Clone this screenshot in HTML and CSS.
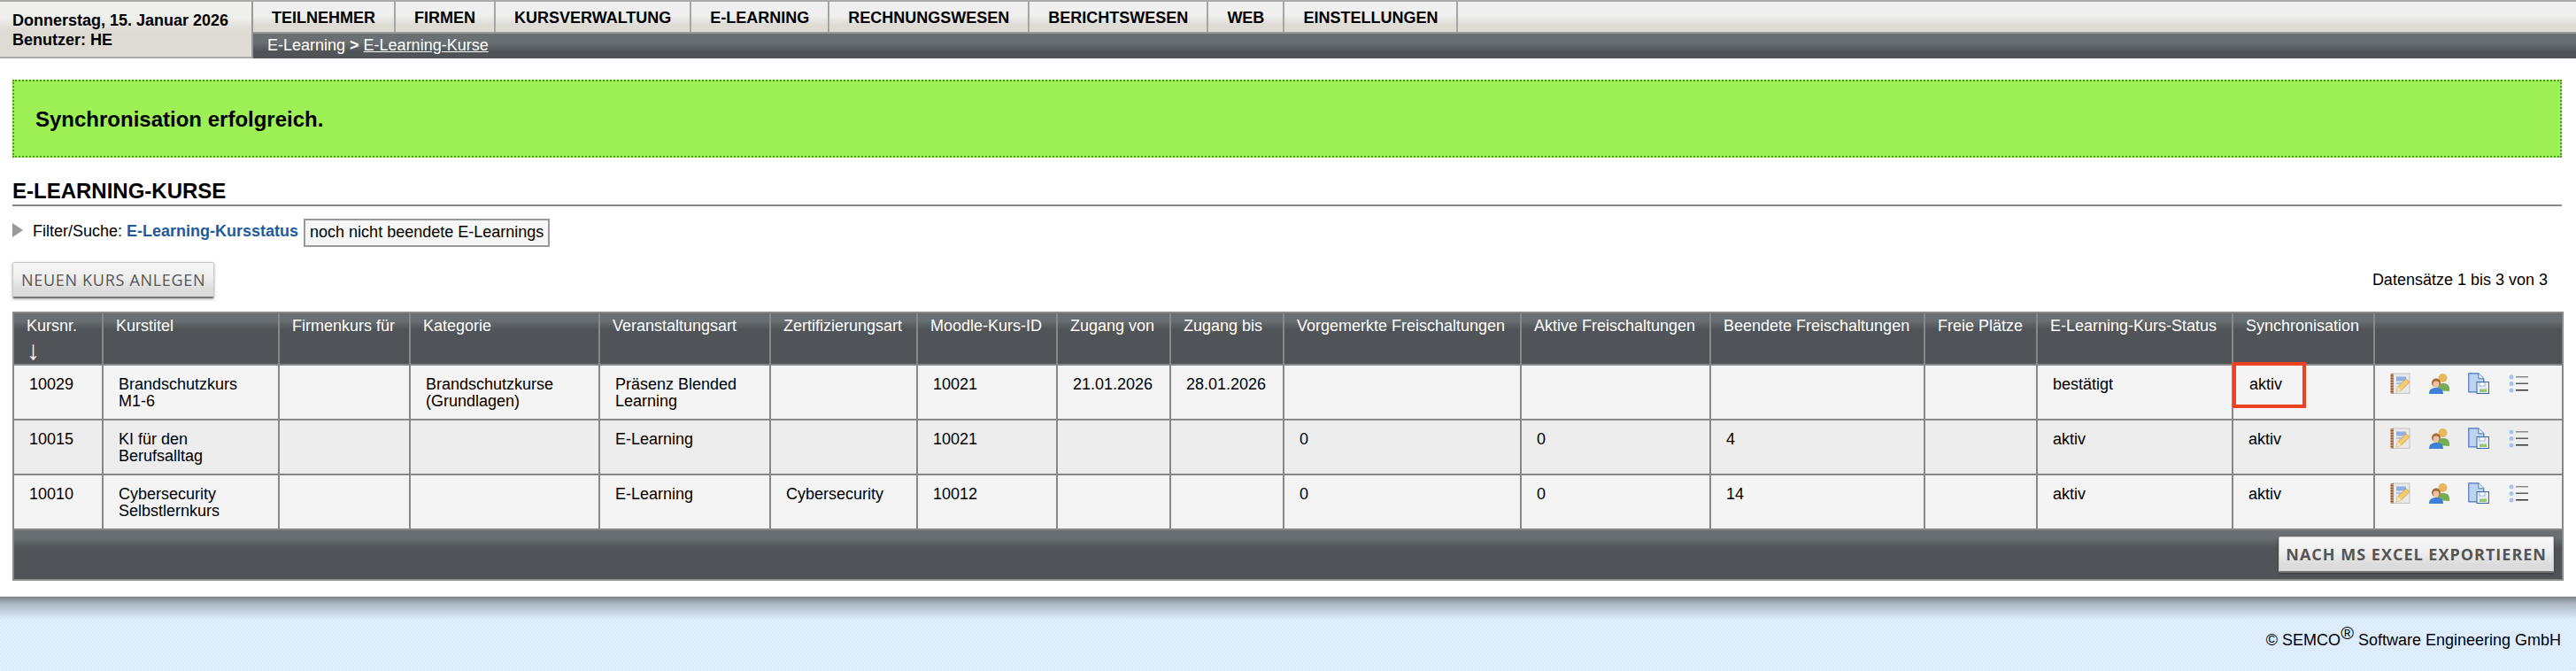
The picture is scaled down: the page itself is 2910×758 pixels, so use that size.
FILE: index.html
```html
<!DOCTYPE html>
<html lang="de">
<head>
<meta charset="utf-8">
<title>E-Learning-Kurse</title>
<link rel="stylesheet" href="styles.css">
</head>
<body>
<svg class="defs" width="0" height="0" aria-hidden="true">
  <symbol id="i-note" viewBox="0 0 24 24">
    <rect x="3" y="1" width="20" height="22.5" fill="#e8e8e8" stroke="#c4c4c4"/>
    <rect x="1.500" y="1" width="3.500" height="22.500" fill="#c08a5c"/>
    <path d="M1.500 3.500h3M1.500 6.500h3M1.500 9.500h3M1.500 12.500h3M1.500 15.500h3M1.500 18.500h3M1.500 21.500h3" stroke="#7d4d28" stroke-width=".8"/>
    <rect x="8" y="4.500" width="11" height="5" fill="#8fb0e4"/>
    <rect x="8" y="11" width="6" height="2" fill="#a9c4ea"/>
    <path d="M8 22l1.500-6L19 7l4 3.500-9.500 9.500z" fill="#f2cc70" stroke="#d09c3c" stroke-width=".8"/>
    <path d="M8 22l1.500-6 4.500 4z" fill="#f6e3b4"/>
  </symbol>
  <symbol id="i-people" viewBox="1 0 24 24">
    <circle cx="16.500" cy="6" r="5" fill="#e8b85a"/>
    <path d="M10 20c0-6 3-8 7-8s7 2 7 6v3z" fill="#74ac58"/>
    <circle cx="9" cy="11.500" r="5" fill="#a66a3c"/>
    <circle cx="9" cy="13" r="3.400" fill="#eec4a0"/>
    <path d="M1 24c0-5 3-7 8-7s8 2 8 7z" fill="#3f7fd6"/>
  </symbol>
  <symbol id="i-doc" viewBox="0 0 24 24">
    <path d="M.8.800h11l6 6v15H.8z" fill="#bcd3f2" stroke="#4d78b8" stroke-width="1.200"/>
    <path d="M11.800.800v6h6" fill="#e6effb" stroke="#4d78b8"/>
    <rect x="10" y="10.500" width="13.500" height="13" fill="#e4ecf8" stroke="#3d66a8"/>
    <rect x="13" y="11" width="6" height="4" fill="#fff" stroke="#6a8cc0" stroke-width=".6"/>
    <rect x="13" y="18.500" width="8" height="3.500" fill="#9cc86c"/>
  </symbol>
  <symbol id="i-list" viewBox="0 0 22 24">
    <circle cx="3" cy="5" r="2.500" fill="#a8c4ee"/>
    <circle cx="3" cy="12.500" r="2.500" fill="#a8c4ee"/>
    <circle cx="3" cy="20" r="2.500" fill="#a8c4ee"/>
    <rect x="8" y="4" width="14" height="1.500" fill="#8a8a8a"/>
    <rect x="8" y="11.500" width="14" height="1.500" fill="#5c5c5c"/>
    <rect x="8" y="19" width="14" height="1.500" fill="#333"/>
  </symbol>
</svg>

<header class="topbar">
  <div class="userbox">
    <div>Donnerstag, 15. Januar 2026</div>
    <div>Benutzer: HE</div>
  </div>
  <div class="navwrap">
    <nav class="tabs">
      <a class="tab">TEILNEHMER</a>
      <a class="tab">FIRMEN</a>
      <a class="tab">KURSVERWALTUNG</a>
      <a class="tab">E-LEARNING</a>
      <a class="tab">RECHNUNGSWESEN</a>
      <a class="tab">BERICHTSWESEN</a>
      <a class="tab">WEB</a>
      <a class="tab">EINSTELLUNGEN</a>
    </nav>
    <div class="crumbs">E-Learning <b class="gt">&gt;</b> <a class="crumb-link">E-Learning-Kurse</a></div>
  </div>
</header>

<main class="content">
  <div class="success">Synchronisation erfolgreich.</div>
  <h1 class="title">E-LEARNING-KURSE</h1>
  <div class="filter">
    <span class="tri"></span>
    <span class="filter-label">Filter/Suche:</span>
    <a class="filter-label filter-link">E-Learning-Kursstatus</a>
    <span class="filter-val">noch nicht beendete E-Learnings</span>
  </div>
  <div class="actions">
    <button class="btn">NEUEN KURS ANLEGEN</button>
    <span class="count">Datensätze 1 bis 3 von 3</span>
  </div>
  <table class="grid">
    <colgroup>
      <col><col><col><col><col><col><col><col><col><col><col><col><col><col><col><col>
    </colgroup>
    <thead>
      <tr>
        <th>Kursnr.<div class="arrow">↓</div></th>
        <th>Kurstitel</th>
        <th>Firmenkurs für</th>
        <th>Kategorie</th>
        <th>Veranstaltungsart</th>
        <th>Zertifizierungsart</th>
        <th>Moodle-Kurs-ID</th>
        <th>Zugang von</th>
        <th>Zugang bis</th>
        <th>Vorgemerkte Freischaltungen</th>
        <th>Aktive Freischaltungen</th>
        <th>Beendete Freischaltungen</th>
        <th>Freie Plätze</th>
        <th>E-Learning-Kurs-Status</th>
        <th>Synchronisation</th>
        <th></th>
      </tr>
    </thead>
    <tbody>
      <tr>
        <td>10029</td><td>Brandschutzkurs M1-6</td><td></td><td>Brandschutzkurse (Grundlagen)</td><td>Präsenz Blended Learning</td><td></td><td>10021</td><td>21.01.2026</td><td>28.01.2026</td><td></td><td></td><td></td><td></td><td>bestätigt</td>
        <td class="marked">aktiv<span class="redbox"></span></td>
        <td class="icons"><svg class="ic"><use href="#i-note"/></svg><svg class="ic"><use href="#i-people"/></svg><svg class="ic"><use href="#i-doc"/></svg><svg class="ic"><use href="#i-list"/></svg></td>
      </tr>
      <tr>
        <td>10015</td><td>KI für den Berufsalltag</td><td></td><td></td><td>E-Learning</td><td></td><td>10021</td><td></td><td></td><td>0</td><td>0</td><td>4</td><td></td><td>aktiv</td><td>aktiv</td>
        <td class="icons"><svg class="ic"><use href="#i-note"/></svg><svg class="ic"><use href="#i-people"/></svg><svg class="ic"><use href="#i-doc"/></svg><svg class="ic"><use href="#i-list"/></svg></td>
      </tr>
      <tr>
        <td>10010</td><td>Cybersecurity Selbstlernkurs</td><td></td><td></td><td>E-Learning</td><td>Cybersecurity</td><td>10012</td><td></td><td></td><td>0</td><td>0</td><td>14</td><td></td><td>aktiv</td><td>aktiv</td>
        <td class="icons"><svg class="ic"><use href="#i-note"/></svg><svg class="ic"><use href="#i-people"/></svg><svg class="ic"><use href="#i-doc"/></svg><svg class="ic"><use href="#i-list"/></svg></td>
      </tr>
    </tbody>
    <tfoot>
      <tr><td colspan="16"><button class="btn btn-strong">NACH MS EXCEL EXPORTIEREN</button></td></tr>
    </tfoot>
  </table>
</main>

<footer class="foot">© SEMCO<sup class="reg">®</sup> Software Engineering GmbH</footer>
</body>
</html>
```

FILE: styles.css
```css
* { box-sizing: border-box; }
html, body { margin: 0; padding: 0; }
body {
  width: 2910px;
  height: 758px;
  overflow: hidden;
  background: #fff;
  color: #000;
  font-family: "Liberation Sans", Arial, sans-serif;
  font-size: 18px;
  display: flex;
  flex-direction: column;
}
.defs { position: absolute; }

.topbar {
  display: flex;
  height: 66px;
  border-top: 2px solid #aaa;
  flex: none;
}
.userbox {
  width: 286px;
  padding: 10px 0 0 14px;
  font-size: 18px;
  font-weight: bold;
  line-height: 22px;
  background: linear-gradient(#efefed 0, #efefed 18px, #dedbd5 32px);
  border-right: 2px solid #999;
  border-bottom: 2px solid #aaa;
}
.navwrap { flex: 1; display: flex; flex-direction: column; }
.tabs {
  display: flex;
  height: 36px;
  background: linear-gradient(#efefef 0, #efefef 16px, #dedbd5 26px);
  border-bottom: 2px solid #999;
}
.tab {
  padding: 0 21px;
  font-size: 18px;
  font-weight: bold;
  line-height: 36px;
  border-right: 2px solid #a5a5a5;
}
.crumbs {
  flex: 1;
  padding-left: 16px;
  color: #fff;
  font-size: 18px;
  line-height: 26px;
  background: linear-gradient(#696f72 0, #696f72 10px, #505458 20px);
}
.gt { font-weight: bold; }
.crumb-link { text-decoration: underline; }

.content { flex: 1; padding: 24px 16px 0 14px; }
.success {
  height: 88px;
  padding-left: 24px;
  line-height: 86px;
  font-size: 24px;
  font-weight: bold;
  background: #9df155;
  border: 2px dotted #4a9a1c;
}
.title {
  margin: 24px 0 0;
  height: 29px;
  font-size: 24px;
  line-height: 27px;
  font-weight: bold;
  border-bottom: 2px solid #888;
  box-sizing: content-box;
}
.filter {
  display: flex;
  align-items: center;
  gap: 5px;
  margin-top: 14px;
  height: 32px;
}
.filter-label { margin-bottom: 3px; }
.tri {
  width: 0;
  height: 0;
  margin: -6px 6px 0 0;
  border-left: 12px solid #999;
  border-top: 8px solid transparent;
  border-bottom: 8px solid transparent;
}
.filter-link { color: #1f5a9c; font-weight: bold; }
.filter-val {
  height: 32px;
  margin-left: 1px;
  padding: 0 6px 0 5px;
  line-height: 26px;
  background: #f6f6f6;
  border: 2px solid #999;
  width: 278px;
  white-space: nowrap;
}
.actions {
  display: flex;
  align-items: center;
  justify-content: space-between;
  margin-top: 17px;
  padding-right: 2px;
  height: 41px;
}
.count { padding-right: 14px; }
.btn {
  height: 41px;
  padding: 0 9px;
  font-family: "Open Sans", sans-serif;
  font-size: 18px;
  letter-spacing: .7px;
  color: #555;
  white-space: nowrap;
  background: linear-gradient(#f6f6f6, #f0f0f0 40%, #dcdcdc 80%);
  border: 1px solid #c8c8c8;
  border-bottom: 2px solid #777;
  border-radius: 2px;
  box-shadow: 0 1px 3px rgba(0, 0, 0, .35);
}
.btn-strong { padding: 0 7px; font-weight: bold; letter-spacing: 1px; }

.grid {
  margin-top: 15px;
  width: 2880px;
  table-layout: fixed;
  border-collapse: collapse;
  border: 2px solid #888;
}
col:nth-child(1) { width: 101px; }
col:nth-child(2) { width: 199px; }
col:nth-child(3) { width: 148px; }
col:nth-child(4) { width: 214px; }
col:nth-child(5) { width: 193px; }
col:nth-child(6) { width: 166px; }
col:nth-child(7) { width: 158px; }
col:nth-child(8) { width: 128px; }
col:nth-child(9) { width: 128px; }
col:nth-child(10) { width: 268px; }
col:nth-child(11) { width: 214px; }
col:nth-child(12) { width: 242px; }
col:nth-child(13) { width: 127px; }
col:nth-child(14) { width: 221px; }
col:nth-child(15) { width: 160px; }
col:nth-child(16) { width: 213px; }
.grid th {
  height: 59px;
  padding: 4px 2px 0 14px;
  vertical-align: top;
  text-align: left;
  color: #fff;
  font-size: 18px;
  font-weight: normal;
  line-height: 20px;
  border: 2px solid #888;
  background: linear-gradient(#696f72 0, #696f72 8px, #505458 18px);
}
.arrow { height: 33px; padding-top: 5px; font-size: 30px; line-height: 26px; overflow: hidden; }
.grid tbody td {
  height: 62px;
  padding: 12px 14px 0 17px;
  vertical-align: top;
  font-size: 18px;
  line-height: 19px;
  border: 2px solid #888;
  background: #f4f4f4;
}
.grid tbody tr:nth-child(2) td { background: #ededed; }
.grid tbody td.marked { position: relative; padding-left: 18px; }
.redbox {
  position: absolute;
  left: -1px;
  top: -4px;
  width: 83px;
  height: 52px;
  border: 4px solid #ee4022;
}
.grid tbody td.icons { padding: 8px 0 0 16px; }
.ic {
  width: 24px;
  height: 24px;
  margin-right: 20.500px;
  filter: blur(.4px);
}
.grid tfoot td {
  height: 57px;
  padding: 7px 9px 0 0;
  text-align: right;
  vertical-align: top;
  border: 2px solid #888;
  background: linear-gradient(#696f72 0, #696f72 8px, #505458 20px);
}

.foot {
  flex: none;
  height: 84px;
  padding: 39px 17px 0 0;
  text-align: right;
  font-size: 18px;
  line-height: 20px;
  background:
    linear-gradient(rgba(128, 132, 135, 1) 0, rgba(150, 160, 170, .7) 8px, rgba(220, 235, 251, 0) 26px),
    repeating-conic-gradient(#e0effe 0 25%, #dbebfc 0 50%) 0 0 / 4px 4px;
}
.reg { font-size: 20px; line-height: 0; }
```
